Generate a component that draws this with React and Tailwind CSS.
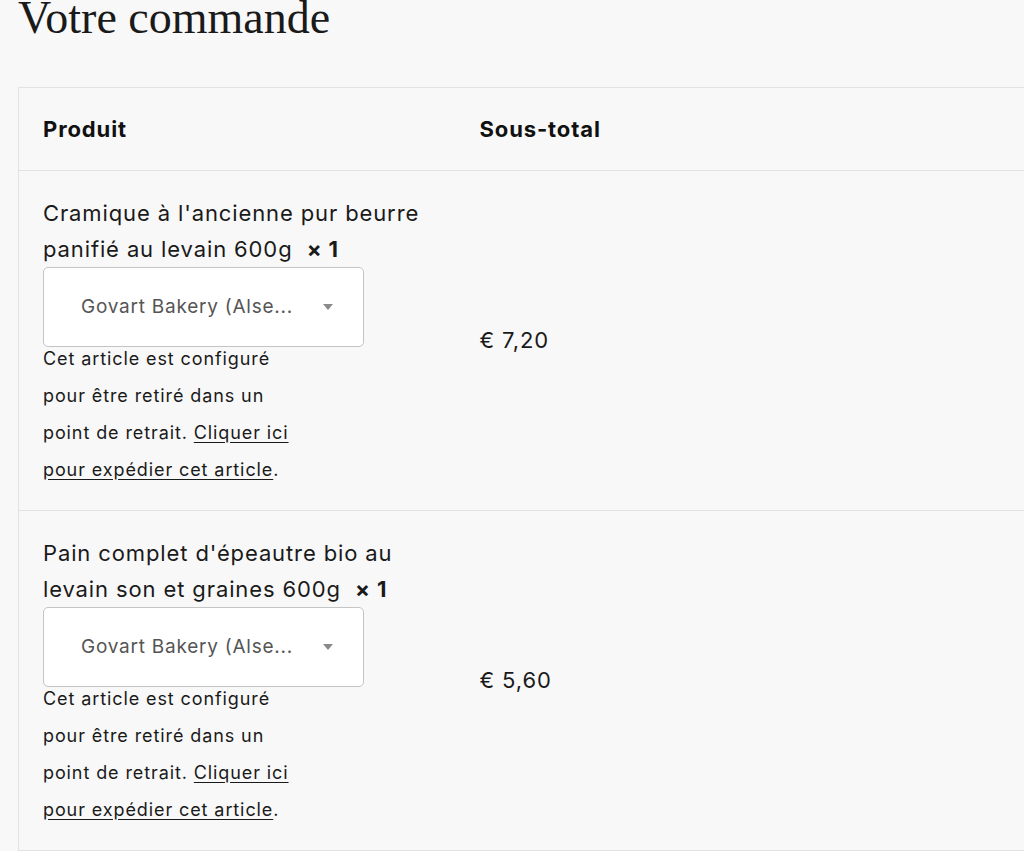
const ITEMS = [
  { name: "Cramique à l'ancienne pur beurre panifié au levain 600g", qty: 1, price: '€ 7,20' },
  { name: "Pain complet d'épeautre bio au levain son et graines 600g", qty: 1, price: '€ 5,60' },
];

function StoreSelect() {
  return (
    <div className="w-[321px] h-[80px] bg-white border border-[#c4c4c4] rounded-[5px] flex items-center pl-[37px] pr-[30px]">
      <span className="flex-1 text-[19px] tracking-[0.04em] text-[#555]">Govart Bakery (Alse...</span>
      <svg width="10" height="6" viewBox="0 0 10 6">
        <path d="M0 0 L10 0 L5 6 Z" fill="#8a8a8a" />
      </svg>
    </div>
  );
}

function ItemRow({ item }) {
  return (
    <tr className="border-b border-[#e2e2e2]">
      <td className="w-[437px] align-top px-6 pt-6 pb-[22px]">
        <div className="text-[22px] tracking-[0.04em] leading-[36px] text-[#1a1a1a]">
          {item.name}&nbsp; <strong className="font-bold">×&nbsp;{item.qty}</strong>
        </div>
        <StoreSelect />
        <p className="w-[258px] -mt-[7px] text-[18px] tracking-[0.05em] leading-[37px] text-[#1a1a1a]">
          Cet article est configuré pour être retiré dans un point de retrait.{' '}
          <a href="#" className="underline underline-offset-[3px]">Cliquer ici pour expédier cet article</a>.
        </p>
      </td>
      <td className="align-middle px-6 text-[22px] tracking-[0.04em] text-[#1a1a1a]">{item.price}</td>
    </tr>
  );
}

export default function App() {
  return (
    <div className="min-h-[851px] bg-[#f8f8f8] overflow-hidden font-['Inter','Noto_Sans',sans-serif]">
      <h1 className="pl-[18px] text-[46px] leading-[36px] text-[#1a1a1a] font-['Liberation_Serif',serif]">
        Votre commande
      </h1>
      <div className="mt-[51px] ml-[18px] w-[1100px]">
        <table className="w-full border-collapse border-l border-t border-[#e2e2e2] text-left">
          <thead>
            <tr className="border-b border-[#e2e2e2]">
              <th className="w-[437px] px-6 py-[23px] text-[22px] tracking-[0.04em] leading-[36px] font-bold text-[#111]">Produit</th>
              <th className="px-6 py-[23px] text-[22px] tracking-[0.04em] leading-[36px] font-bold text-[#111]">Sous-total</th>
            </tr>
          </thead>
          <tbody>
            {ITEMS.map((item, i) => (
              <ItemRow key={i} item={item} />
            ))}
          </tbody>
        </table>
      </div>
    </div>
  );
}
